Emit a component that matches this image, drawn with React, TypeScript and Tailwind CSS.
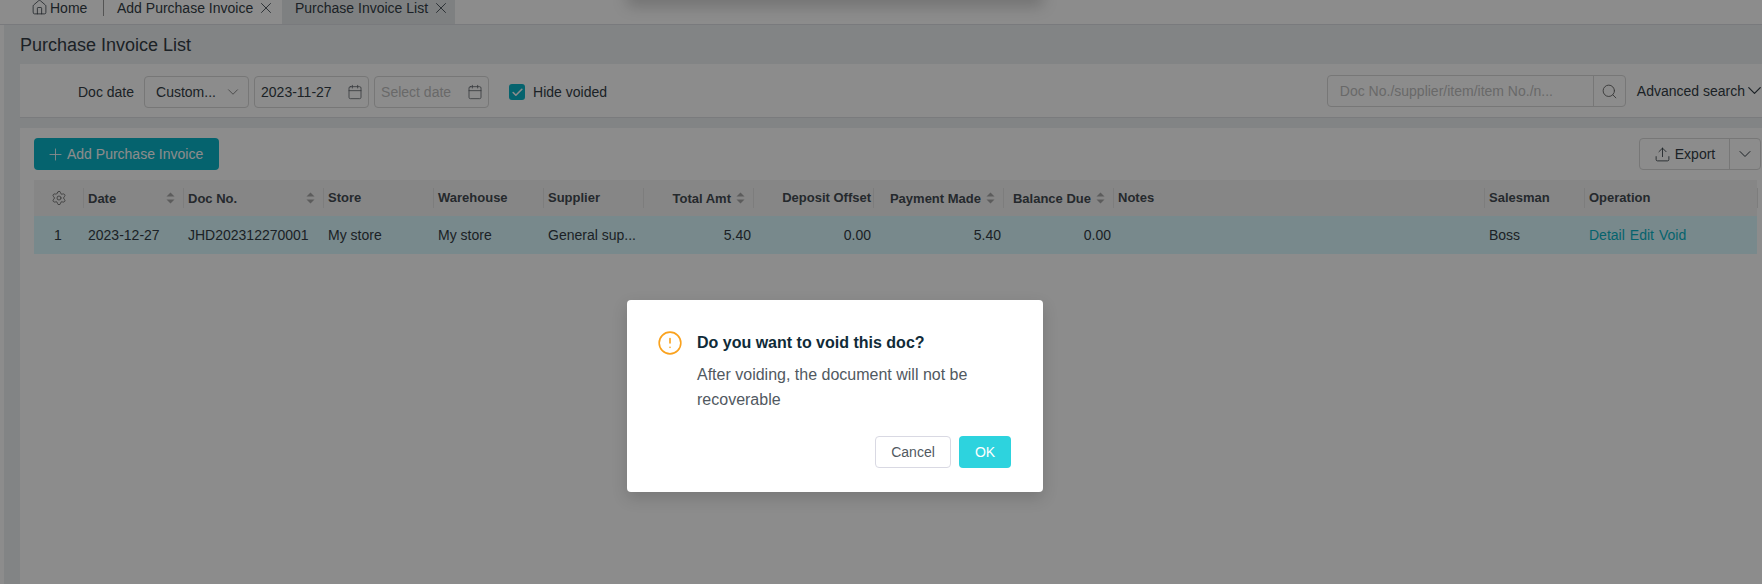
import { Calendar, Check, ChevronDown, CircleAlert, Home, Plus, Search, Settings, Upload, X } from "lucide-react";

const SortArrows = () => (
  <svg width="9" height="12" viewBox="0 0 9 12" className="shrink-0 fill-[#a8a8a8]">
    <path d="M4.5 0.5 8.5 4.5H0.5Z" />
    <path d="M4.5 11.5 8.5 7.5H0.5Z" />
  </svg>
);

interface ColumnProps {
  label: string;
  width: string;
  sort?: boolean;
  right?: boolean;
}

const HeaderCell = ({ label, width, sort, right }: ColumnProps) => (
  <div className={`${width} flex h-5 shrink-0 items-center border-r border-[#e3e3e3] pl-1 text-[13px] font-bold text-[#444c52] ${right ? "justify-end" : "justify-between"} ${right && !sort ? "pr-[2px]" : "pr-1"}`}>
    <span className={sort ? "pt-0.5" : ""}>{label}</span>
    {sort && <span className={right ? "ml-[5px] mr-[4px]" : "mr-[4px]"}><SortArrows /></span>}
  </div>
);

const DateInput = ({ value, placeholder }: { value?: string; placeholder?: string }) => (
  <div className="flex h-8 w-[115px] items-center justify-between rounded-[4px] border border-[#d9d9d9] pl-[6px] pr-[5px] text-sm">
    <span className={value ? "text-[#333d45]" : "text-[#bfbfbf]"}>{value ?? placeholder}</span>
    <Calendar size={16} strokeWidth={1.2} className="text-[#5f666c]" />
  </div>
);

const TabClose = () => <X size={18} strokeWidth={1.1} className="-mt-px ml-1" />;

export default function App() {
  return (
    <div className="relative flex h-[584px] w-[1762px] flex-col overflow-hidden bg-white font-['Liberation_Sans',Arial,sans-serif] text-sm text-[#333d45]">
      {/* tabs */}
      <div className="flex h-[25px] shrink-0 items-stretch border-b border-[#dcdfe4] bg-white pl-[31px] text-sm leading-4">
        <div className="flex h-6 w-[72px] items-start gap-0.5">
          <Home size={17} strokeWidth={1.1} className="-mt-px" />
          <span>Home</span>
        </div>
        <div className="h-4 w-px bg-[#999]" />
        <div className="flex h-6 w-[178px] items-start pl-[13px]">
          <span>Add Purchase Invoice</span>
          <TabClose />
        </div>
        <div className="flex h-6 w-[173px] items-start bg-[#e6e9ec] pl-[13px]">
          <span>Purchase Invoice List</span>
          <TabClose />
        </div>
      </div>

      <div className="flex min-h-0 flex-1 bg-white pl-1">
        <div className="flex min-w-0 flex-1 flex-col bg-[#edf0f3] pl-4">
          <div className="flex h-[39px] shrink-0 items-center text-lg text-[#333d45]">Purchase Invoice List</div>

          {/* filters */}
          <div className="flex h-[54px] shrink-0 items-start border-b border-[#dfe1e4] bg-white pl-[58px] pt-3">
            <span className="mr-2.5 text-sm leading-8">Doc date</span>
            <div className="mr-[5px] flex h-8 w-[105px] items-center justify-between rounded-[4px] border border-[#d9d9d9] pl-[11px] pr-[6px] text-sm">
              <span>Custom...</span>
              <ChevronDown size={18} strokeWidth={1} className="text-[#666]" />
            </div>
            <div className="flex gap-[5px]">
              <DateInput value="2023-11-27" />
              <DateInput placeholder="Select date" />
            </div>
            <div className="ml-5 mt-2 flex h-4 w-4 items-center justify-center rounded-[3px] bg-[#0ab5c8]">
              <Check size={13} strokeWidth={3} className="text-white" />
            </div>
            <span className="ml-2 text-sm leading-8">Hide voided</span>
            <div className="-mt-px ml-auto flex h-8 w-[299px] rounded-[4px] border border-[#d9d9d9]">
              <span className="flex-1 truncate pl-3 leading-[30px] text-[#bfbfbf]">Doc No./supplier/item/item No./n...</span>
              <div className="flex w-8 items-center justify-center border-l border-[#d9d9d9]">
                <Search size={17} strokeWidth={1.3} className="text-[#666]" />
              </div>
            </div>
            <span className="-mt-px ml-[11px] text-sm leading-8">Advanced search</span>
            <ChevronDown size={23} strokeWidth={1.3} className="-mr-1 -ml-0.5 mt-[3px]" />
          </div>

          {/* list */}
          <div className="mt-2.5 flex flex-1 flex-col bg-white pl-3.5 pr-[5px]">
            <div className="mt-2.5 flex h-8 items-stretch justify-between">
              <div className="flex w-[185px] items-center rounded-[4px] bg-[#0ab5c8] pl-3 text-sm text-white">
                <Plus size={19} strokeWidth={1.1} className="mr-0.5" />
                Add Purchase Invoice
              </div>
              <div className="-mr-1 flex w-[122px] rounded-[4px] border border-[#d9d9d9]">
                <div className="flex w-[89px] items-center justify-center gap-1 text-sm">
                  <Upload size={17} strokeWidth={1.2} />
                  Export
                </div>
                <div className="flex flex-1 items-center justify-center border-l border-[#d9d9d9]">
                  <ChevronDown size={20} strokeWidth={1.2} />
                </div>
              </div>
            </div>

            {/* table */}
            <div className="mt-2.5 flex h-9 items-center bg-[#f4f4f4]">
              <div className="flex h-5 w-[50px] shrink-0 items-center justify-center border-r border-[#e3e3e3]">
                <Settings size={16} strokeWidth={1.1} className="text-[#555]" />
              </div>
              <HeaderCell label="Date" width="w-[100px]" sort />
              <HeaderCell label="Doc No." width="w-[140px]" sort />
              <HeaderCell label="Store" width="w-[110px]" />
              <HeaderCell label="Warehouse" width="w-[110px]" />
              <HeaderCell label="Supplier" width="w-[100px]" />
              <HeaderCell label="Total Amt" width="w-[110px]" sort right />
              <HeaderCell label="Deposit Offset" width="w-[120px]" right />
              <HeaderCell label="Payment Made" width="w-[130px]" sort right />
              <HeaderCell label="Balance Due" width="w-[110px]" sort right />
              <HeaderCell label="Notes" width="w-[371px]" />
              <HeaderCell label="Salesman" width="w-[100px]" />
              <HeaderCell label="Operation" width="w-[173px]" />
            </div>
            <div className="flex h-[38px] items-center bg-[#dbf9ff] text-sm text-[#333d45]">
              <div className="w-[50px] shrink-0 pr-0.5 text-center">1</div>
              <div className="w-[100px] shrink-0 pl-1">2023-12-27</div>
              <div className="w-[140px] shrink-0 pl-1">JHD202312270001</div>
              <div className="w-[110px] shrink-0 pl-1">My store</div>
              <div className="w-[110px] shrink-0 pl-1">My store</div>
              <div className="w-[100px] shrink-0 pl-1">General sup...</div>
              <div className="w-[110px] shrink-0 pr-[3px] text-right">5.40</div>
              <div className="w-[120px] shrink-0 pr-[3px] text-right">0.00</div>
              <div className="w-[130px] shrink-0 pr-[3px] text-right">5.40</div>
              <div className="w-[110px] shrink-0 pr-[3px] text-right">0.00</div>
              <div className="w-[371px] shrink-0" />
              <div className="w-[100px] shrink-0 pl-1">Boss</div>
              <div className="flex w-[173px] shrink-0 gap-[5px] pl-1 text-[#0ab5c8]">
                <span>Detail</span>
                <span>Edit</span>
                <span>Void</span>
              </div>
            </div>
          </div>
        </div>
      </div>

      {/* another dialog sliding away above the top edge */}
      <div className="absolute -top-[20px] left-[627px] h-5 w-[416px] shadow-[0_6px_16px_rgba(0,0,0,0.2)]" />

      {/* mask */}
      <div className="absolute inset-0 bg-black/45" />

      {/* dialog */}
      <div className="absolute left-[627px] top-[300px] h-[192px] w-[416px] rounded-[4px] bg-white pl-8 pr-8 pt-8 shadow-[0_6px_16px_rgba(0,0,0,0.15)]">
        <div className="flex">
          <CircleAlert size={26} strokeWidth={1.5} className="-ml-0.5 -mt-0.5 shrink-0 text-[#faa21e]" />
          <div className="ml-3.5">
            <div className="mt-px text-base font-bold leading-5 text-[#102b38]">Do you want to void this doc?</div>
            <div className="mt-[9px] text-base leading-[25px] text-[#51595f]">After voiding, the document will not be recoverable</div>
          </div>
        </div>
        <div className="absolute bottom-6 right-8 flex gap-2">
          <div className="flex h-8 w-[76px] items-center justify-center rounded-[4px] border border-[#d9d9e3] text-sm text-[#51595f]">Cancel</div>
          <div className="flex h-8 w-[52px] items-center justify-center rounded-[4px] bg-[#2dd3de] text-sm font-medium text-white">OK</div>
        </div>
      </div>
    </div>
  );
}
